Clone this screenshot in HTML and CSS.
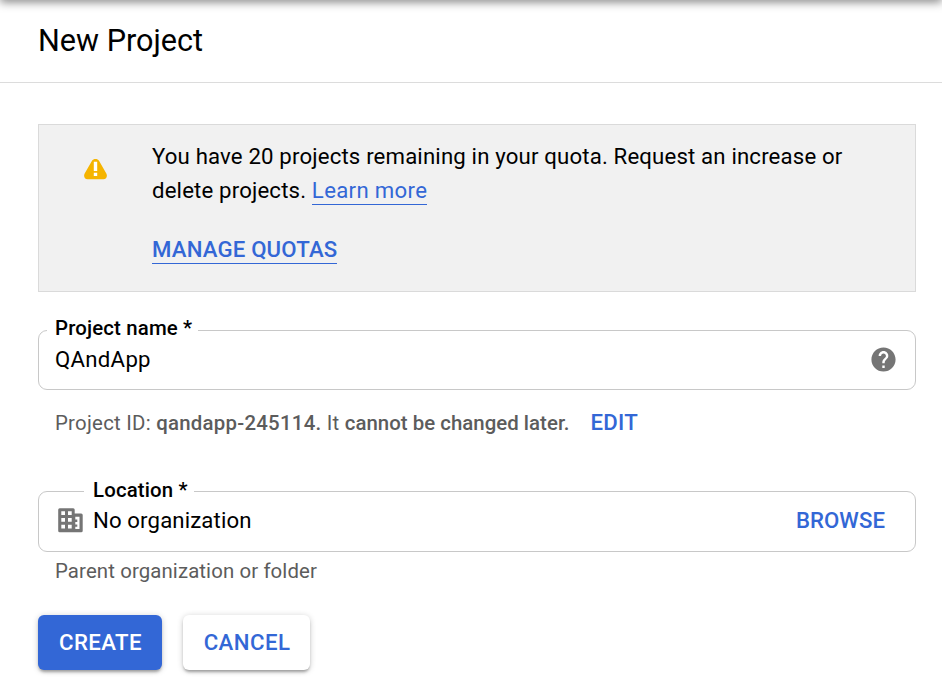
FILE: index.html
```html
<!DOCTYPE html>
<html lang="en">
<head>
<meta charset="utf-8">
<title>New Project</title>
<link rel="stylesheet" href="styles.css">
</head>
<body>
<div class="topbar"></div>
<header class="header"><h1 class="title">New Project</h1></header>
<main class="content">
  <section class="banner">
    <svg class="warn-icon" width="23" height="22" viewBox="0 0 23 22">
      <path d="M8 2.700C9.400.3 13.600.3 15 2.700l7.200 12.600c1.600 2.800.3 5.900-2.700 5.900h-16c-3 0-4.300-3.100-2.700-5.900z" fill="#f5b400"/>
      <path d="M9.800 3.800h3.400v9.100H9.800zM9.800 14.800h3.400V18H9.800z" fill="#fff"/>
    </svg>
    <div class="banner-body">
      <p class="banner-text">You have 20 projects remaining in your quota. Request an increase or delete projects. <a class="link learn" href="#">Learn more</a></p>
      <a class="link manage" href="#">MANAGE QUOTAS</a>
    </div>
  </section>
  <div class="field name-field">
    <label class="label">Project name *</label>
    <span class="value">QAndApp</span>
    <svg class="help-icon" width="29" height="29" viewBox="0 0 24 24" fill="#757575"><path d="M12 2C6.480 2 2 6.480 2 12s4.480 10 10 10 10-4.480 10-10S17.520 2 12 2zm1 17h-2v-2h2v2zm2.070-7.750l-.9.920C13.450 12.900 13 13.500 13 15h-2v-.5c0-1.100.45-2.100 1.170-2.830l1.240-1.260c.37-.36.590-.86.590-1.410 0-1.100-.9-2-2-2s-2 .9-2 2H8c0-2.210 1.790-4 4-4s4 1.790 4 4c0 .88-.36 1.680-.93 2.250z"/></svg>
  </div>
  <div class="hint id-hint"><span>Project ID: <b>qandapp-245114.</b> It <b class="tight">cannot be changed later.</b></span><a class="action" href="#">EDIT</a></div>
  <div class="field location-field">
    <label class="label label-inset">Location *</label>
    <svg class="org-icon" width="28" height="27" viewBox="0 0 28 27">
      <path fill="#757575" d="M3.700 2.300h13.500q1.500 0 1.500 1.500v3.700h6.500q1.500 0 1.500 1.500v15.800q0 1.500-1.500 1.500H3.700q-1.500 0-1.500-1.500v-21q0-1.500 1.500-1.500z"/>
      <path fill="#fff" d="M5.300 5.300h3.700v3.700H5.300zM12 5.300h3.700v3.700H12zM5.300 12h3.700v3.700H5.300zM12 12h3.700v3.700H12zM5.300 18.700h3.700v3.700H5.300zM12 18.700h3.700v3.700H12zM19.300 10.800h4.200v12.200h-4.200v-2.200h2v-2.300h-2v-2.600h2v-2.500h-2z"/>
    </svg>
    <span class="value">No organization</span>
    <a class="action" href="#">BROWSE</a>
  </div>
  <div class="hint">Parent organization or folder</div>
  <div class="buttons">
    <button class="button primary">CREATE</button>
    <button class="button">CANCEL</button>
  </div>
</main>
</body>
</html>
```

FILE: styles.css
```css
* { box-sizing: border-box; }
body { margin: 0; min-height: 100vh; background: #fff; color: #000; font-family: Roboto, sans-serif; font-size: 22.200px; }
.topbar { position: absolute; top: -10px; left: 0; right: 0; height: 10px; box-shadow: 0 2px 10px rgba(0,0,0,.5); }
.header { height: 83px; padding: 1px 38px 0; border-bottom: 1px solid #dcdcdc; }
.title { margin: 0; font-size: 30.600px; font-weight: 400; line-height: 80px; }
.content { min-height: 616px; padding: 41px 26px 0 38px; }
.banner { display: flex; height: 168px; background: #f1f1f1; border: 1px solid #dadada; padding: 14px 45px 0; }
.warn-icon { flex: none; margin-top: 18.500px; }
.banner-body { margin-left: 45px; }
.banner-text { margin: 0 0 26px; width: 710px; line-height: 34px; letter-spacing: .16px; }
.link { padding-bottom: 1px; color: #3367d6; text-decoration: none; border-bottom: 1px solid #3367d6; }
.learn { letter-spacing: .32px; }
.manage { font-weight: 500; line-height: 33px; letter-spacing: .17px; }
.field { position: relative; display: flex; align-items: center; border: 1px solid #c8c8c8; border-radius: 9px; padding: 0 16px; letter-spacing: .12px; }
.name-field { height: 60px; margin-top: 38px; padding-bottom: 2px; letter-spacing: .28px; }
.location-field { height: 61px; margin-top: 50px; padding-bottom: 4px; }
.label { position: absolute; top: -15px; left: 8px; padding: 0 6px 0 8px; background: #fff; font-size: 20.400px; font-weight: 500; line-height: 24px; letter-spacing: .15px; white-space: nowrap; }
.label-inset { top: -14px; left: 45px; padding-left: 9px; }
.help-icon { margin-left: auto; margin-right: 1px; }
.org-icon { margin: 0 9px 0 1px; }
.hint { padding-left: 17px; color: #5c5c5c; font-size: 20.400px; line-height: 38px; letter-spacing: .11px; }
.hint b { font-weight: 500; }
.id-hint { display: flex; height: 51px; padding-top: 14px; letter-spacing: .25px; }
.hint .tight { letter-spacing: .03px; }
.action { color: #3367d6; font-size: 22.200px; font-weight: 500; letter-spacing: .05px; text-decoration: none; }
.id-hint .action { margin-top: -1px; margin-left: 21px; letter-spacing: .25px; }
.location-field .action { margin-left: auto; margin-right: 14px; }
.buttons { display: flex; gap: 21px; margin-top: 25px; }
.button { height: 55px; width: 127px; padding: 0 0 2px 1px; border: 0; border-radius: 6px; background: #fff; color: #3367d6; font: 500 22.200px Roboto, sans-serif; letter-spacing: .45px; box-shadow: 0 3px 3px -1px rgba(0,0,0,.3), 0 1px 6px rgba(0,0,0,.2); }
.primary { width: 124px; background: #3367d6; color: #fff; }
```
